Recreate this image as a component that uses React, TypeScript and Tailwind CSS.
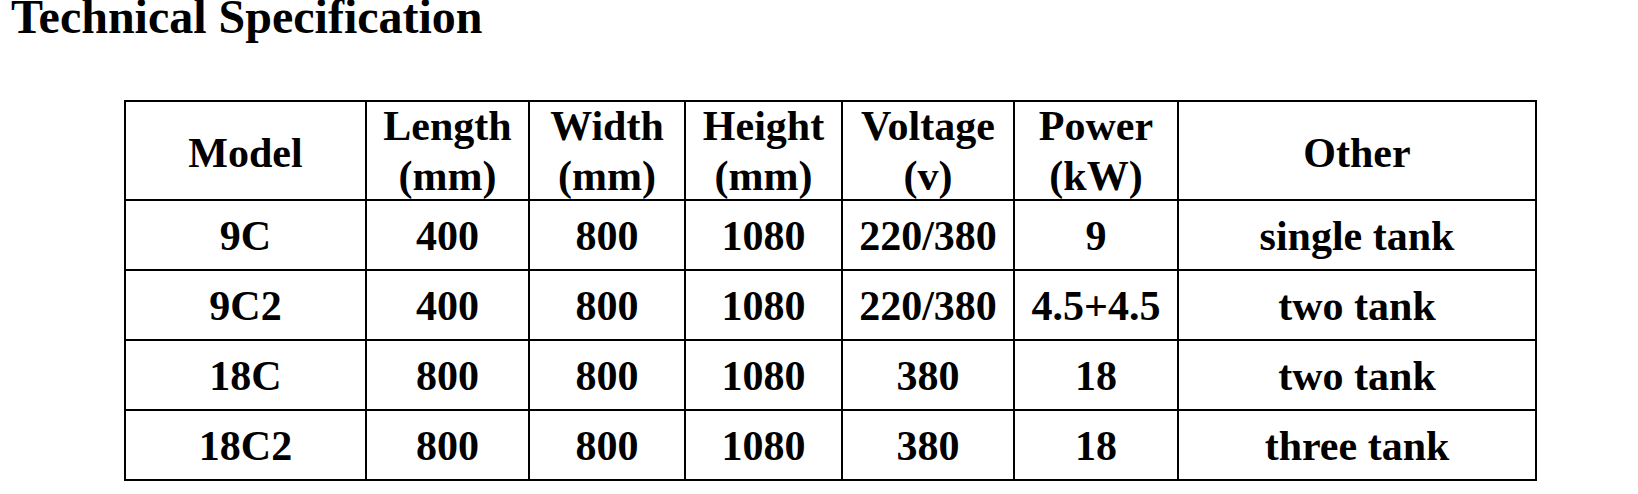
const headers = [
  ["Model"],
  ["Length", "(mm)"],
  ["Width", "(mm)"],
  ["Height", "(mm)"],
  ["Voltage", "(v)"],
  ["Power", "(kW)"],
  ["Other"],
];

const rows = [
  ["9C", "400", "800", "1080", "220/380", "9", "single tank"],
  ["9C2", "400", "800", "1080", "220/380", "4.5+4.5", "two tank"],
  ["18C", "800", "800", "1080", "380", "18", "two tank"],
  ["18C2", "800", "800", "1080", "380", "18", "three tank"],
];

export default function App() {
  return (
    <div
      className="min-h-screen bg-white text-black"
      style={{ fontFamily: '"Liberation Serif", "Times New Roman", serif' }}
    >
      <h1 className="pl-[11px] text-[48px] leading-[34px] font-bold">
        Technical Specification
      </h1>

      <div className="mt-[66px] ml-[124px] grid w-fit grid-cols-[241px_163px_156px_157px_172px_164px_358px] border-t-2 border-l-2 border-black text-[42px] font-bold">
        {headers.map((h, i) => (
          <div
            key={i}
            className={
              "flex h-[99px] flex-col items-center justify-center overflow-visible border-r-2 border-b-2 border-black text-center leading-[50px] " +
              (h.length === 1 ? "pt-[4px]" : "")
            }
          >
            {h.map((line) => (
              <span key={line}>{line}</span>
            ))}
          </div>
        ))}
        {rows.map((row, r) =>
          row.map((cell, c) => (
            <div
              key={r + "-" + c}
              className="flex h-[70px] items-center justify-center border-r-2 border-b-2 border-black pt-[2px] leading-none"
            >
              {cell}
            </div>
          ))
        )}
      </div>
    </div>
  );
}
